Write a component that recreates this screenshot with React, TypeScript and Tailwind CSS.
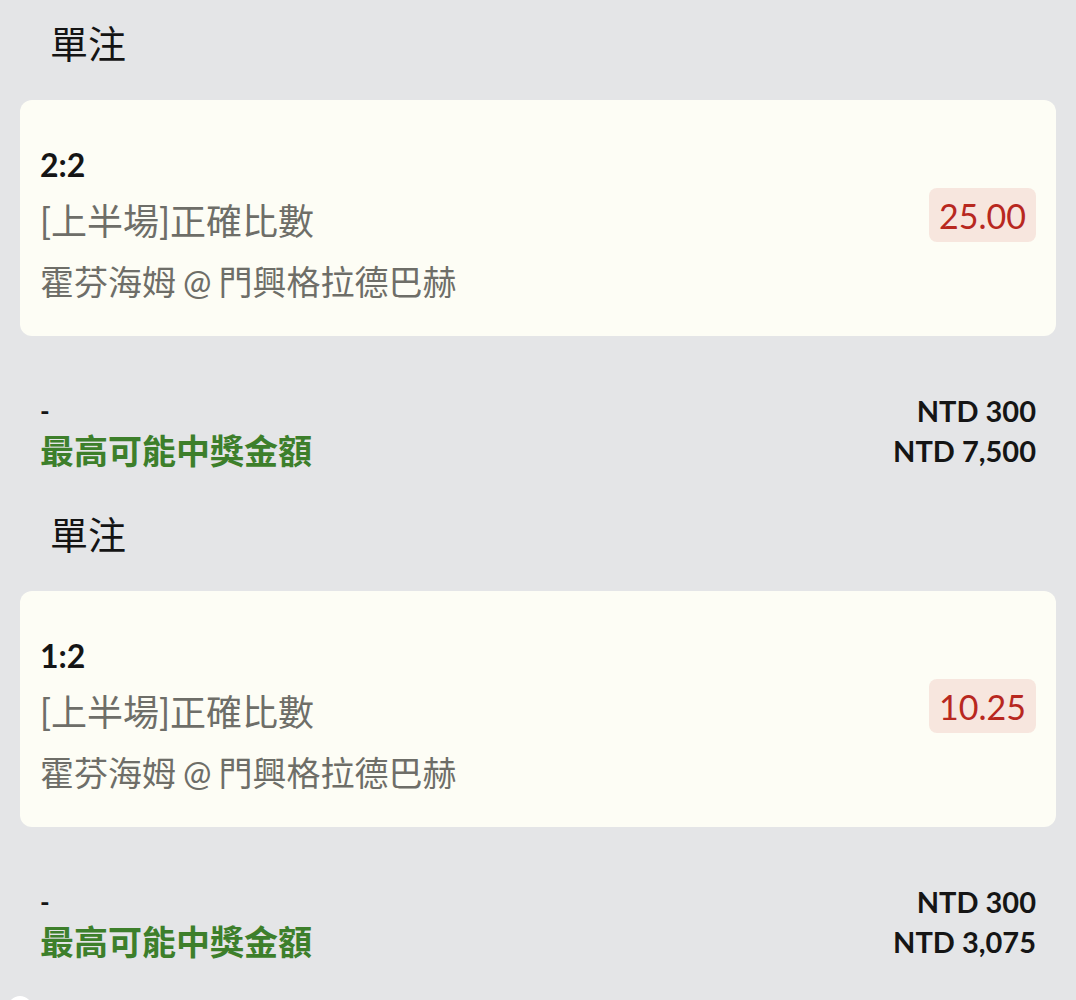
const font = "font-['Lato','Noto_Sans_CJK_TC',sans-serif]"

type Bet = {
  score: string
  market: string
  home: string
  away: string
  odds: string
  stake: string
  payout: string
}

const bets: Bet[] = [
  {
    score: "2:2",
    market: "[上半場]正確比數",
    home: "霍芬海姆",
    away: "門興格拉德巴赫",
    odds: "25.00",
    stake: "NTD 300",
    payout: "NTD 7,500",
  },
  {
    score: "1:2",
    market: "[上半場]正確比數",
    home: "霍芬海姆",
    away: "門興格拉德巴赫",
    odds: "10.25",
    stake: "NTD 300",
    payout: "NTD 3,075",
  },
]

const BetSection = ({ bet }: { bet: Bet }) => {
  return (
    <div className="pt-[14px] pb-[20px]">
      <h2 className="px-[50px] mb-[28px] text-[38px] leading-[58px] text-[#141414]">單注</h2>

      <div className="mx-[20px] h-[236px] rounded-[12px] bg-[#fdfdf5] pl-[20px] pr-[20px] pt-[39px] pb-[23px] flex justify-between">
        <div className="flex flex-col">
          <div className="text-[32px] leading-[52px] font-bold text-[#151515]">{bet.score}</div>
          <div className="text-[36px] leading-[60px] text-[#6e6e68]">{bet.market}</div>
          <div className="text-[34px] leading-[62px] text-[#6e6e68]">
            {bet.home}
            <span className="mx-[7px]">@</span>
            {bet.away}
          </div>
        </div>
        <div className="self-center mb-[22px] rounded-[8px] bg-[#f7e6de] px-[10px] h-[54px] flex items-center text-[34px] text-[#b8281f]">
          {bet.odds}
        </div>
      </div>

      <div className="mx-[40px] mt-[55px] flex justify-between">
        <div className="flex flex-col">
          <div className="h-[40px] leading-[40px] text-[26px] font-bold text-[#151515]">-</div>
          <div className="h-[40px] leading-[40px] text-[34px] font-bold text-[#3d7f2b]">最高可能中獎金額</div>
        </div>
        <div className="flex flex-col items-end">
          <div className="h-[40px] leading-[40px] text-[29px] font-bold text-[#151515]">{bet.stake}</div>
          <div className="h-[40px] leading-[40px] text-[29px] font-bold text-[#151515]">{bet.payout}</div>
        </div>
      </div>
    </div>
  )
}

const App = () => {
  return (
    <div className={`${font} min-h-screen w-full bg-[#e4e5e7] overflow-hidden`}>
      {bets.map((bet, index) => (
        <BetSection bet={bet} key={index} />
      ))}
      <div className="ml-[8px] mt-[14px] h-[24px] w-[24px] rounded-full bg-white" />
    </div>
  )
}

export default App
